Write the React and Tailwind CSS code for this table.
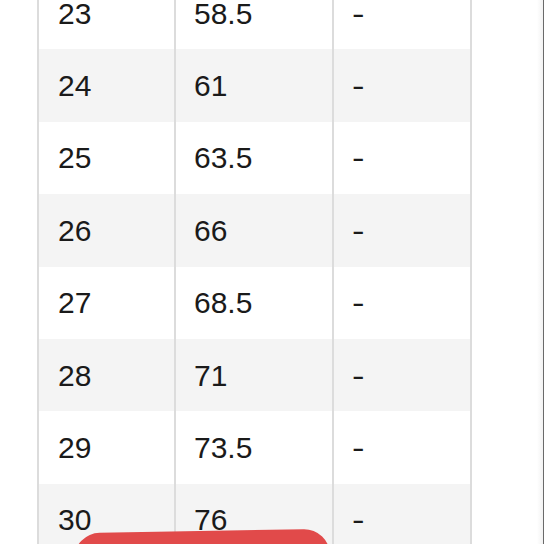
import React from "react";

const rows = [
  ["23", "58.5", "-"],
  ["24", "61", "-"],
  ["25", "63.5", "-"],
  ["26", "66", "-"],
  ["27", "68.5", "-"],
  ["28", "71", "-"],
  ["29", "73.5", "-"],
  ["30", "76", "-"],
];

const App = () => {
  return (
    <div
      className="relative w-[544px] h-[544px] overflow-hidden bg-white flex"
      style={{ fontFamily: '"Liberation Sans", Arial, sans-serif' }}
    >
      <div className="w-[37px] shrink-0" />
      <div className="w-[435px] shrink-0 -mt-[23px] flex flex-col border-l-2 border-r-2 border-[#dcdcdc]">
        {rows.map((r, i) => (
          <div
            key={r[0]}
            className={`flex h-[72.4px] shrink-0 items-center text-[30px] text-[#1a1a1a] ${
              i % 2 === 1 ? "bg-[#f4f4f4]" : "bg-white"
            }`}
          >
            <div className="w-[137px] h-full flex items-center pl-[19px] border-r-2 border-[#dcdcdc]">
              {r[0]}
            </div>
            <div className="w-[158px] h-full flex items-center pl-[18px] border-r-2 border-[#dcdcdc]">
              {r[1]}
            </div>
            <div className="flex-1 h-full flex items-center pl-[18px]">
              <span className="inline-block scale-x-125 origin-left">{r[2]}</span>
            </div>
          </div>
        ))}
      </div>
      <div className="flex-1 flex justify-end">
        <div className="w-[6px] h-full bg-gradient-to-r from-white to-[#f2f2f2]" />
        <div className="w-[1.5px] h-full bg-[#6a6a6a]" />
      </div>
      <div className="absolute left-[74px] top-[531px] w-[256px] h-[40px] rounded-t-[26px] bg-[#e14a4a] -rotate-[1deg]" />
    </div>
  );
};

export default App;
